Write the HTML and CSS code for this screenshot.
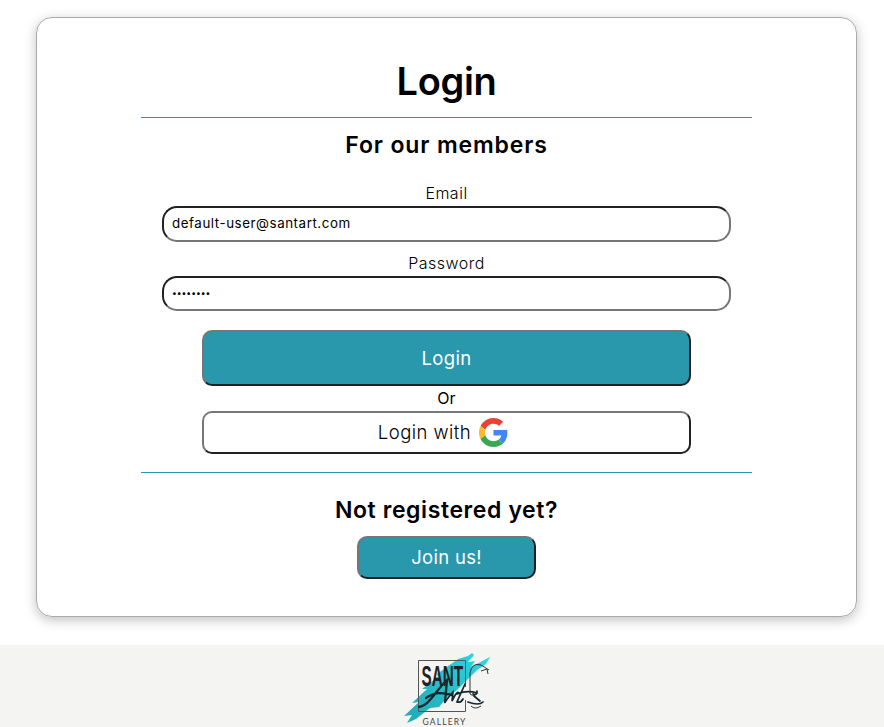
FILE: index.html
```html
<!DOCTYPE html>
<html lang="en">
<head>
<meta charset="utf-8">
<title>Login</title>
<link rel="stylesheet" href="styles.css">
</head>
<body>
<main class="card">
  <h1 class="title">Login</h1>
  <form class="form">
    <h2 class="subtitle">For our members</h2>
    <label class="label label-email" for="email">Email</label>
    <input class="field" id="email" type="email" value="default-user@santart.com">
    <label class="label label-password" for="password">Password</label>
    <input class="field field-password" id="password" type="password" value="password">
    <button class="btn btn-login" type="button">Login</button>
    <span class="or">Or</span>
    <button class="btn btn-google" type="button"><span>Login with</span>
      <svg class="google" viewBox="0 0 48 48" aria-hidden="true">
        <path fill="#e94235" d="M24 9.5c3.54 0 6.71 1.22 9.21 3.6l6.85-6.85C35.9 2.38 30.47 0 24 0 14.62 0 6.51 5.38 2.56 13.22l7.98 6.19C12.43 13.72 17.74 9.5 24 9.5z"/>
        <path fill="#4285f4" d="M46.98 24.55c0-1.57-.15-3.09-.38-4.55H24v9.02h12.94c-.58 2.96-2.26 5.48-4.78 7.18l7.73 6c4.51-4.18 7.09-10.36 7.09-17.65z"/>
        <path fill="#fabb2d" d="M10.53 28.59c-.48-1.45-.76-2.99-.76-4.59s.27-3.14.76-4.59l-7.98-6.19C.92 16.46 0 20.12 0 24c0 3.88.92 7.54 2.56 10.78z"/>
        <path fill="#3aa757" d="M24 48c6.48 0 11.93-2.13 15.89-5.81l-7.73-6c-2.15 1.45-4.92 2.3-8.16 2.3-6.26 0-11.57-4.22-13.47-9.91l-7.98 6.19C6.51 42.62 14.62 48 24 48z"/>
      </svg>
    </button>
  </form>
  <h2 class="question">Not registered yet?</h2>
  <button class="btn btn-join" type="button">Join us!</button>
</main>
<footer class="footer">
  <svg class="logo" viewBox="0 0 90 75" role="img" aria-label="Sant Art Gallery">
    <defs>
      <linearGradient id="paint" x1="0" y1="1" x2="1" y2="0">
        <stop offset="0" stop-color="#20a9b8"/>
        <stop offset=".55" stop-color="#27c0cb"/>
        <stop offset="1" stop-color="#2adbe8"/>
      </linearGradient>
    </defs>
    <path fill="url(#paint)" d="M1 63 16 49 9 50 24 36 19 36 35 24 34 21 55 6 65 3 69 0 71 2 65 9 72 8 68 14 87 4 83 11 74 17 61 30 53 38 46 42 36 54 27 55 13 66 4 70 9 62Z"/>
    <path class="ink frame" d="M62.5 34V7.5H15.500V58.500H62.500V47"/>
    <text class="logo-sant" transform="translate(18.500 33) scale(.51 1)">SANT</text>
    <path class="brush" d="M16 54C26 53 34 36 44 27L42 49M23 45C35 37 42 41 49 42"/>
    <path class="brush thin" d="M42 49C46 44 48 41 50 39L49 48C52 42 54 38 56 40M62 31 54 49Q58 50 60 46M54 41Q64 37 74 40"/>
    <path class="ink" d="M67 41V20Q69 9 78 12L86 17M78 18 84 16 85 21M67 41Q69 43 72 42"/>
    <path class="brush thin" d="M70 41Q74 43 74 38M71 43 77 48M65 49Q76 53 80 49"/>
    <path class="ink" d="M68 53Q72 57 78 53"/>
    <text class="logo-gallery" x="19.500" y="71.500">GALLERY</text>
  </svg>
</footer>
</body>
</html>
```
FILE: styles.css
```css
* { box-sizing: border-box; }

body {
  margin: 0;
  height: 727px;
  padding-top: 17px;
  overflow: hidden;
  background: #fff;
  color: #000;
  font-family: Inter, "Liberation Sans", sans-serif;
  font-size: 16px;
}

.card {
  display: flex;
  flex-direction: column;
  align-items: center;
  width: 821px;
  height: 600px;
  margin-left: 36px;
  padding-top: 39px;
  border: 1px solid #aaa;
  border-radius: 16px;
  box-shadow: 0 3px 12px rgba(0, 0, 0, .25);
}

.title, .subtitle, .question { margin: 0; font-weight: 600; white-space: nowrap; }
.title { height: 60px; line-height: 48px; font-size: 38px; letter-spacing: -.3px; }

.form {
  display: flex;
  flex-direction: column;
  align-items: center;
  width: 611px;
  height: 356px;
  border-top: 1px solid #2997ac;
  border-bottom: 1px solid #2997ac;
}

.subtitle, .question { font-size: 23px; line-height: 32px; }
.subtitle { margin-top: 11px; letter-spacing: .87px; }

.label { font-weight: 300; line-height: 24px; letter-spacing: .5px; }
.label-email { margin-top: 20px; }
.label-password { margin-top: 9px; margin-bottom: 1px; }

.field {
  width: 569px;
  height: 36px;
  padding: 0 8px;
  border: 2px inset #767676;
  border-radius: 15px;
  background: #fff;
  color: #000;
  font: 400 13.33px Inter, "Liberation Sans", sans-serif;
}
#email { margin-top: 1px; padding-bottom: 2px; letter-spacing: .56px; }
.field-password { height: 35px; padding-bottom: 2px; font-size: 8.5px; }

.btn {
  display: flex;
  align-items: center;
  justify-content: center;
  padding: 0;
  border: 2px outset #767676;
  border-radius: 10px;
  background: #2997ac;
  color: #fff;
  font: 400 18.5px Inter, "Liberation Sans", sans-serif;
  letter-spacing: .3px;
}
.btn-login { width: 489px; height: 56px; margin-top: 19px; }
.or { height: 25px; line-height: 25px; }
.btn-google {
  width: 489px;
  height: 43px;
  gap: 8px;
  padding-right: 7px;
  padding-bottom: 1px;
  background: #fff;
  color: #000;
  font-weight: 300;
  letter-spacing: .45px;
}
.google { width: 29px; height: 29px; }

.question { margin-top: 21px; letter-spacing: .6px; }
.btn-join { width: 179px; height: 43px; margin-top: 10px; padding-bottom: 1px; }

.footer {
  display: flex;
  justify-content: center;
  height: 82px;
  margin-top: 28px;
  padding-top: 8px;
  background: #f4f4f2;
}
.logo { width: 90px; height: 75px; margin-left: 12px; overflow: visible; }
.logo-sant { font: 700 30px "Liberation Sans", sans-serif; fill: #202326; }
.logo-gallery { font: 400 8.5px Lato, sans-serif; fill: #444; letter-spacing: 1.15px; }
.ink, .brush { fill: none; stroke: #333; stroke-width: 1; }
.frame { stroke: #555; }
.brush { stroke: #16282d; stroke-width: 2.3; stroke-linecap: round; }
.thin { stroke-width: 1.7; }
```
